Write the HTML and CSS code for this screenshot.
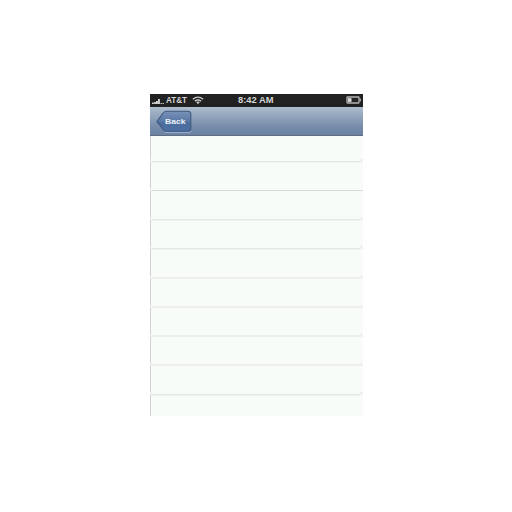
FILE: index.html
```
<!DOCTYPE html>
<html lang="en">
<head>
<meta charset="utf-8">
<title>List</title>
<link rel="stylesheet" href="styles.css">
</head>
<body>
<main class="phone">
  <header class="status">
    <div class="carrier">
      <svg class="signal" width="12" height="7" viewBox="0 0 12 7"><path d="M0 4.500h1.800V6H0zM2.100 4h1.800v2H2.100zM4 3h1.900v3H4zM6 1h1.900v5H6z" fill="#d4d4d4"/><path d="M8.500 5h1.500v1H8.500zM10.500 5h1.500v1h-1.500z" fill="#bbb"/></svg>
      <svg width="22" height="11" viewBox="0 0 22 11"><text class="label carrier-name" x="0" y="8.100" textLength="21" lengthAdjust="spacingAndGlyphs">AT&amp;T</text></svg>
      <svg class="wifi" width="12" height="9" viewBox="0 0 12 9"><g fill="none" stroke="#c8c8c8" stroke-width="1.350"><path d="M.8 3.200Q6-.9 11.200 3.200"/><path d="M2.800 5.200Q6 2.700 9.200 5.200"/></g><path d="M4.100 6.100Q6 4.900 7.900 6.100L6 8.200z" fill="#c8c8c8"/></svg>
    </div>
    <svg class="clock" width="38" height="11" viewBox="0 0 38 11"><text class="label time" x="1" y="8.100" textLength="35.500" lengthAdjust="spacingAndGlyphs">8:42 AM</text></svg>
    <svg class="battery" width="16" height="9" viewBox="0 0 16 9"><rect x="1" y="1" width="12" height="6" rx=".5" fill="#242424" stroke="#b5b5b5" stroke-width="1.300"/><path d="M2 2.200h3.500v3.700H2z" fill="#ddd"/><path d="M13.500 2.500h1.400v3h-1.400z" fill="#aaa"/></svg>
  </header>
  <nav class="bar">
    <svg class="back" width="38" height="24" viewBox="0 0 38 24">
      <defs>
        <linearGradient id="face" x1="0" y1="0" x2="0" y2="1"><stop offset="0" stop-color="#7892b7"/><stop offset=".45" stop-color="#5d7ba8"/><stop offset=".6" stop-color="#4c6d9d"/><stop offset="1" stop-color="#4d6fa3"/></linearGradient>
      </defs>
      <path d="M9 22.500h24q2 0 2-2" fill="none" stroke="#a3b8d2" stroke-width=".8"/>
      <path d="M.8 11.500Q4.600 7 6.500 3.800 8 1.300 10.500 1.300h21.300q3 0 3 3v14q0 3-3 3H10.500q-2.500 0-4-2.500Q4.600 15.400.8 11.500z" fill="url(#face)" stroke="#3f597f" stroke-width="1.100"/>
      <text class="label" x="9" y="14.200" textLength="20.500" lengthAdjust="spacingAndGlyphs">Back</text>
    </svg>
  </nav>
  <ul class="list">
    <li class="row first"></li>
    <li class="row strong"></li>
    <li class="row"></li>
    <li class="row"></li>
    <li class="row tall soft"></li>
    <li class="row soft"></li>
    <li class="row soft"></li>
    <li class="row soft"></li>
    <li class="row"></li>
    <li class="row last"></li>
  </ul>
</main>
</body>
</html>
```
FILE: styles.css
```
* { box-sizing: border-box; }
body {
  margin: 0;
  padding: 94px 0 0 150px;
  background: #fff;
  font-family: "Liberation Sans", sans-serif;
}
svg { display: block; flex: none; }
.phone {
  width: 213px;
  height: 322px;
  display: flex;
  flex-direction: column;
  overflow: hidden;
}
.status {
  height: 13px;
  background: #202120;
  display: grid;
  grid-template-columns: 87px 1fr 17px;
  align-items: center;
}
.carrier {
  display: flex;
  align-items: center;
  padding-left: 2px;
}
.signal { margin: 2px 2px 0 0; }
.wifi { margin-left: 4px; }
.label {
  font-size: 8px;
  font-weight: bold;
  fill: #d6d6d6;
}
.carrier-name { font-size: 9px; }
.time { font-size: 9.5px; }
.bar .label { fill: #edf2f8; }
.bar {
  height: 29px;
  padding: 3px 0 0 6px;
  background: linear-gradient(#b0c0d0 0, #a1b2c6 14%, #8499b3 50%, #778dab 65%, #6c83a3 96%, #5e6b82 97%);
}
.list {
  list-style: none;
  margin: 0;
  padding: 0;
  background: #f7fcf9;
}
.row {
  height: 29px;
  position: relative;
  border-left: 1px solid #cfd2d0;
  border-right: 3px solid #f9faf9;
  background: linear-gradient(#e3e7e5, #e3e7e5) bottom / 100% 1px no-repeat;
}
.row + .row { box-shadow: inset 0 1px #f1f4f2; }
.row::before,
.row::after {
  content: "";
  position: absolute;
  bottom: -1px;
  height: 4px;
  background: #edf2ef;
}
.row::before { left: -1px; width: 2px; }
.row::after { right: -3px; width: 3px; }
.first { height: 26px; }
.strong { background-image: linear-gradient(#d6dad8, #d6dad8); }
.row.strong + .row { box-shadow: none; }
.strong::after { bottom: 0; height: 1px; background: #d6dad8; }
.tall { height: 30px; }
.soft {
  background: linear-gradient(#edefed, #edefed) bottom / 100% 2px no-repeat;
}
.row.soft + .row { box-shadow: none; }
.last { height: 21px; background: none; }
.last::before,
.last::after { display: none; }
```
